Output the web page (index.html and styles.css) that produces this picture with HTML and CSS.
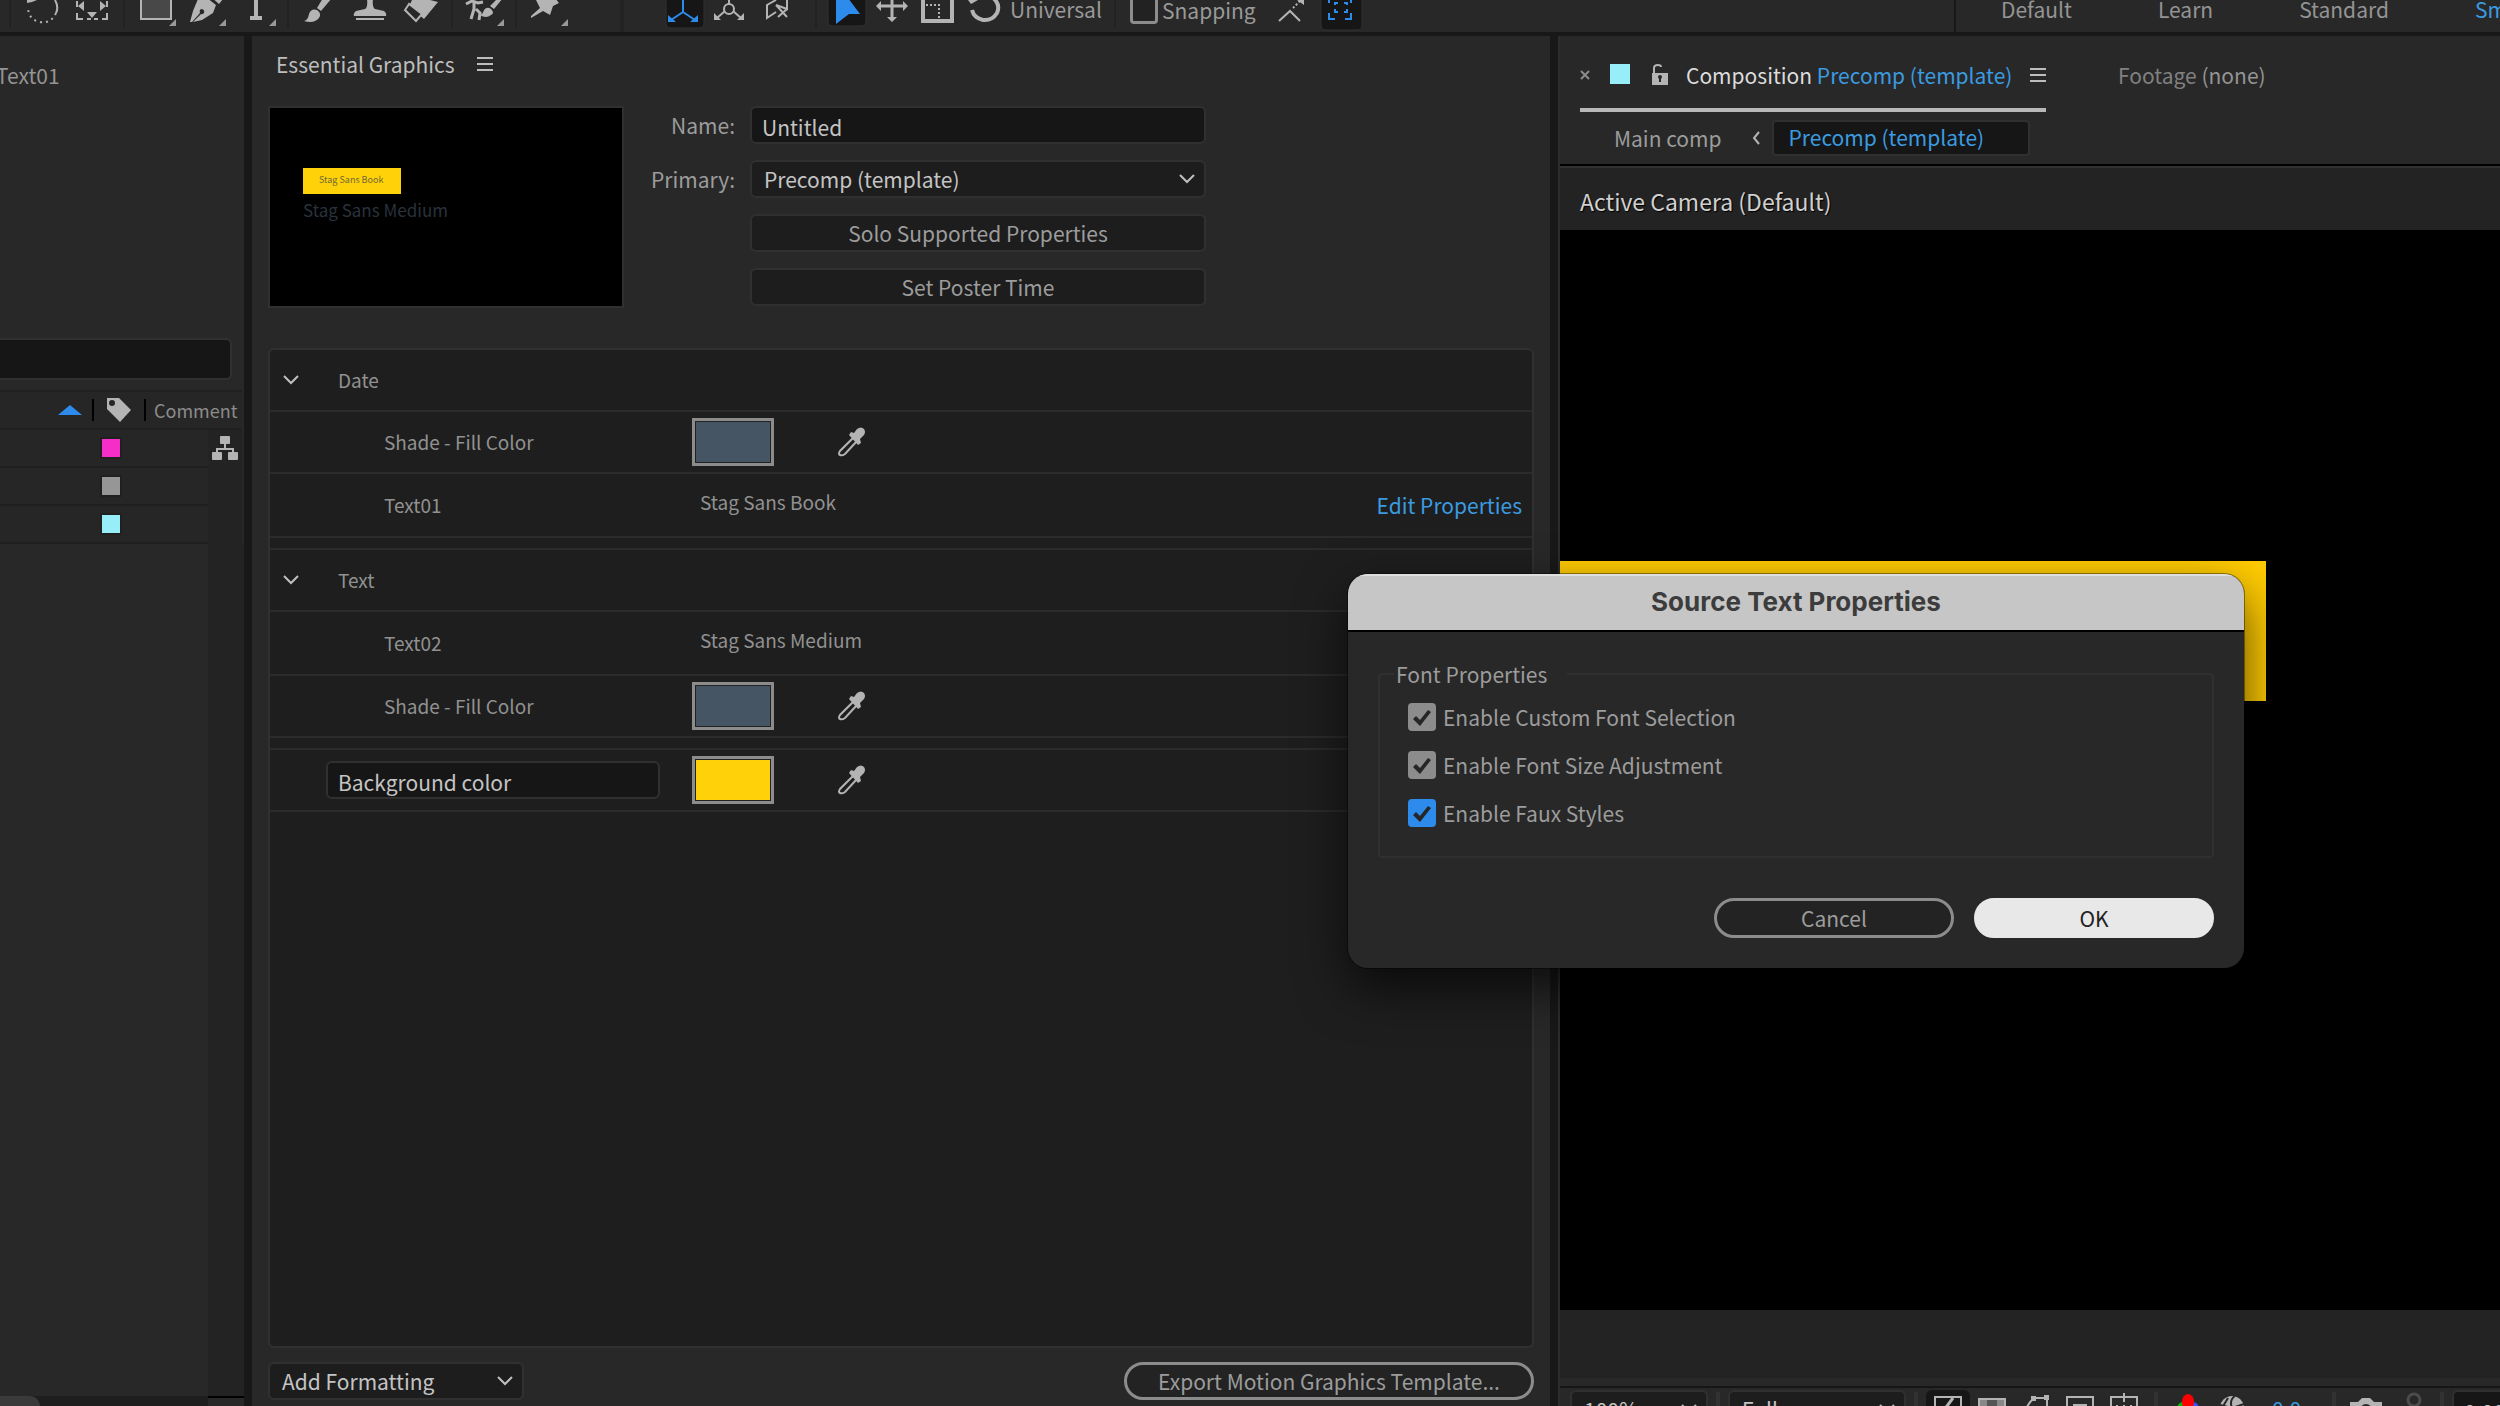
FILE: index.html
```html
<!DOCTYPE html>
<html lang="en">
<head>
<meta charset="utf-8">
<title>Essential Graphics</title>
<link rel="stylesheet" href="styles.css">
</head>
<body>
<svg class="defs" aria-hidden="true">
  <symbol id="dropper" viewBox="0 0 30 30">
    <path d="M17 11 4 24q-2 3 0 4t5-1L21 14" fill="none" stroke="#b4b4b4" stroke-width="2"/>
    <path d="M13 8l2-3 3 1 3-4q4-3 7 0 2 3 0 6l-4 4 1 4-3 2z" fill="#b4b4b4"/>
  </symbol>
  <symbol id="chevron" viewBox="0 0 16 10"><path d="M1 1l7 7 7-7" fill="none" stroke="#c0c0c0" stroke-width="2"/></symbol>
  <symbol id="menu" viewBox="0 0 16 14"><path d="M0 1h16M0 7h16M0 13h16" stroke="#bdbdbd" stroke-width="2"/></symbol>
</svg>
<div class="app">
  <header class="toolbar">
    <span class="sep"></span>
    <button class="tool" aria-label="Rotate"><svg viewBox="17 0 50 32"><path d="M27 0h10l-5 2-5 1z" fill="#b4b4b4"/><path d="M55 0q4 7 1 13" fill="none" stroke="#b4b4b4" stroke-width="2"/><path d="M56 13q-5 11-16 9-11-2-12-14" fill="none" stroke="#b4b4b4" stroke-width="2" stroke-dasharray="2 4"/></svg></button>
    <button class="tool" aria-label="Pan behind"><svg viewBox="67 0 50 32"><path d="M77 1v6M77 13v6h6M87 19h4M94 19h4M102 19h5v-6M107 7V1" fill="none" stroke="#b4b4b4" stroke-width="2"/><path d="M84 1v10l-6-5zM100 1v10l6-5zM87 12h10l-5 6z" fill="#b4b4b4"/></svg></button>
    <span class="sep"></span>
    <button class="tool" aria-label="Rectangle"><svg viewBox="131 0 50 32"><path d="M141-8h30v27h-30z" fill="#484848" stroke="#b4b4b4" stroke-width="2"/><path d="M176 19v7h-7z" fill="#999"/></svg></button>
    <button class="tool" aria-label="Pen"><svg viewBox="181 0 50 32"><path d="M198-1l-5 12-3 11 2 0 8-9q-1-3 1-4 4 0 3 4-2 2-3 1l-8 8 9-2 11-7 3-8-9-7z" fill="#b4b4b4"/><path d="M211-3l8 7 4-5z" fill="#b4b4b4"/><path d="M226 19v7h-7z" fill="#999"/></svg></button>
    <button class="tool" aria-label="Type"><svg viewBox="231 0 50 32"><path d="M256 0v18M250 18h12" stroke="#b4b4b4" stroke-width="4"/><path d="M276 19v7h-7z" fill="#999"/></svg></button>
    <span class="sep"></span>
    <button class="tool" aria-label="Brush"><svg viewBox="295 0 50 32"><path d="M304 21q4-1 5-7 2-6 8-4 5 3 2 8-5 6-15 3zM317 8l6-10h9l-11 13z" fill="#b4b4b4"/></svg></button>
    <button class="tool" aria-label="Clone stamp"><svg viewBox="345 0 50 32"><path d="M367-1h6q-1 8 2 10l9 2q3 2 2 5h-32q-1-3 2-5l9-2q3-2 2-10zM356 18h28v2h-28z" fill="#b4b4b4"/></svg></button>
    <button class="tool" aria-label="Eraser"><svg viewBox="395 0 50 32"><path d="M414-4l24 6-14 17-15-13z" fill="#b4b4b4"/><path d="M409 4l-4 6 11 11 6-7z" fill="#282828" stroke="#b4b4b4" stroke-width="2"/></svg></button>
    <span class="sep"></span>
    <button class="tool" aria-label="Roto brush"><svg viewBox="459 0 50 32"><path d="M466 4l6-3 6 2 5-1M474 1l0 8-3 10M476 9l4 4-1 7" fill="none" stroke="#b4b4b4" stroke-width="3"/><path d="M480 15q3-1 4-5 3-4 7-1 4 4 0 6-5 4-11 0zM490 6l8-8h5l-9 11z" fill="#b4b4b4"/><path d="M504 19v7h-7z" fill="#999"/></svg></button>
    <span class="sep"></span>
    <button class="tool" aria-label="Puppet pin"><svg viewBox="523 0 50 32"><path d="M535-2h20l4 5-6 3-3 9-7-4-12 7 0-2 9-8z" fill="#b4b4b4"/><path d="M568 19v7h-7z" fill="#999"/></svg></button>
    <span class="sep wide"></span>
    <button class="tool axis" aria-label="Local axis"><svg viewBox="662 0 46 32"><path d="M666-4h38v28q0 4-4 4h-30q-4 0-4-4z" fill="#161616" stroke="#303030"/><path d="M683 0v12l-12 8M683 12l12 8" fill="none" stroke="#2d8ceb" stroke-width="2"/><path d="M668 15v7h8zM698 15v7h-8z" fill="#2d8ceb"/></svg></button>
    <button class="tool axis" aria-label="World axis"><svg viewBox="708 0 46 32"><path d="M729 0v4M725 11l-8 7M733 11l8 7" stroke="#b4b4b4" stroke-width="2"/><circle cx="729" cy="9" r="5" fill="none" stroke="#b4b4b4" stroke-width="2"/><path d="M714 13v7h7zM744 13v7h-7z" fill="#b4b4b4"/></svg></button>
    <button class="tool axis" aria-label="View axis"><svg viewBox="754 0 46 32"><path d="M776 0l-9 5v13l9-6M787 0v9l-11-4M776 5l11 12M787 9l-9 8" fill="none" stroke="#b4b4b4" stroke-width="2"/></svg></button>
    <span class="sep group"></span>
    <button class="tool axis" aria-label="Selection"><svg viewBox="824 0 46 32"><path d="M828-4h38v26q0 4-4 4h-30q-4 0-4-4z" fill="#161616" stroke="#303030"/><path d="M836-2h12l12 16h-11l-13 10z" fill="#2d8ceb"/></svg></button>
    <button class="tool axis" aria-label="Position"><svg viewBox="870 0 46 32"><path d="M892 0v20M878 6h28" stroke="#b4b4b4" stroke-width="3"/><path d="M887 17h10l-5 5zM881 1v10l-5-5zM903 1v10l5-5z" fill="#b4b4b4"/></svg></button>
    <button class="tool axis" aria-label="Scale"><svg viewBox="916 0 46 32"><path d="M923-6h29v27h-29z" fill="none" stroke="#b4b4b4" stroke-width="4"/><path d="M926 5h13v15" fill="none" stroke="#b4b4b4" stroke-width="2" stroke-dasharray="2 2"/></svg></button>
    <button class="tool axis" aria-label="Rotation"><svg viewBox="962 0 46 32"><path d="M992-3q9 7 5 16-5 8-14 7-9-2-11-10" fill="none" stroke="#b4b4b4" stroke-width="4"/><path d="M968 0h10l-7 4z" fill="#b4b4b4"/></svg></button>
    <span class="mode">Universal</span>
    <span class="sep snap-sep"></span>
    <label class="snap"><input type="checkbox"> Snapping</label>
    <button class="tool edge" aria-label="Snap to edges"><svg viewBox="1270 0 50 32"><path d="M1279 21l11-10 10 10" fill="none" stroke="#b4b4b4" stroke-width="2"/><path d="M1293 8l7-7" stroke="#b4b4b4" stroke-width="2" stroke-dasharray="2 2"/><path d="M1297 0h7v5z" fill="#b4b4b4"/></svg></button>
    <button class="tool edge" aria-label="Snap to features"><svg viewBox="1320 0 50 32"><path d="M1321-4h41v30q0 4-4 4h-33q-4 0-4-4z" fill="#161616" stroke="#303030"/><path d="M1329 0v3M1351 0v3M1329 13v6h6M1345 19h6v-6M1335 5V3h3M1347 5V3h-3M1335 9v3h3M1347 9v3h-3" fill="none" stroke="#2d8ceb" stroke-width="2"/></svg></button>
    <nav class="workspaces">
      <a href="#">Default</a><a href="#">Learn</a><a href="#">Standard</a><a href="#" class="current">Small Screen</a>
    </nav>
  </header>

  <main class="panels">
    <section class="panel project">
      <div class="item-name">Text01</div>
      <input class="search" type="text" aria-label="Search project">
      <table class="items">
        <colgroup><col class="w-name"><col class="w-label"><col><col class="w-side"></colgroup>
        <thead>
          <tr>
            <th><svg class="sort" viewBox="0 0 24 10"><path d="M0 10 12 0l12 10z" fill="#2d8ceb"/></svg></th>
            <th class="c-label"><svg width="26" height="26" viewBox="0 0 26 26"><path d="M1 1h12l12 12-11 12L1 12z" fill="#b4b4b4"/><circle cx="6" cy="6" r="3" fill="#262626"/></svg></th>
            <th class="c-comment" colspan="2">Comment</th>
          </tr>
        </thead>
        <tbody>
          <tr><td></td><td><span class="chip pink"></span></td><td></td><td class="side"><svg width="26" height="24" viewBox="0 0 26 24"><path d="M9 0h8q1 0 1 1v6q0 1-1 1H9q-1 0-1-1V1q0-1 1-1zM1 16h8q1 0 1 1v6q0 1-1 1H1q-1 0-1-1v-6q0-1 1-1zM17 16h8q1 0 1 1v6q0 1-1 1h-8q-1 0-1-1v-6q0-1 1-1z" fill="#b4b4b4"/><path d="M13 8v5M5 16v-3h16v3" fill="none" stroke="#b4b4b4" stroke-width="2"/></svg></td></tr>
          <tr><td></td><td><span class="chip gray"></span></td><td></td><td class="side"></td></tr>
          <tr><td></td><td><span class="chip cyan"></span></td><td></td><td class="side"></td></tr>
        </tbody>
      </table>
      <div class="rest"><div class="blank"><div class="track"><div class="thumb"></div></div></div><div class="gutter"></div></div>
    </section>

    <section class="panel graphics">
      <h2 class="panel-title">Essential Graphics <svg width="16" height="14"><use href="#menu"/></svg></h2>
      <div class="setup">
        <div class="poster"><span class="poster-tag">Stag Sans Book</span><span class="poster-text">Stag Sans Medium</span></div>
        <div class="form">
          <label for="name">Name:</label>
          <input id="name" class="field" type="text" value="Untitled">
          <label for="primary">Primary:</label>
          <div class="select"><select id="primary" class="field"><option>Precomp (template)</option></select><svg width="16" height="10"><use href="#chevron"/></svg></div>
          <button class="flat">Solo Supported Properties</button>
          <button class="flat">Set Poster Time</button>
        </div>
      </div>

      <div class="props">
        <div class="row head"><svg width="16" height="10"><use href="#chevron"/></svg><span>Date</span></div>
        <div class="row"><span class="prop">Shade - Fill Color</span><input type="color" value="#455563" aria-label="Date fill color"><svg class="dropper"><use href="#dropper"/></svg></div>
        <div class="row text"><span class="prop">Text01</span><span class="value">Stag Sans Book</span><a href="#" class="edit">Edit Properties</a></div>
        <div class="gap-row"></div>
        <div class="row head"><svg width="16" height="10"><use href="#chevron"/></svg><span>Text</span></div>
        <div class="row text"><span class="prop">Text02</span><span class="value">Stag Sans Medium</span></div>
        <div class="row"><span class="prop">Shade - Fill Color</span><input type="color" value="#455563" aria-label="Text fill color"><svg class="dropper"><use href="#dropper"/></svg></div>
        <div class="gap-row"></div>
        <div class="row"><input class="field rename" type="text" value="Background color" aria-label="Property name"><input type="color" value="#ffd109" aria-label="Background color"><svg class="dropper"><use href="#dropper"/></svg></div>
      </div>

      <div class="actions">
        <div class="select"><select class="field" aria-label="Add Formatting"><option>Add Formatting</option></select><svg width="16" height="10"><use href="#chevron"/></svg></div>
        <button class="pill">Export Motion Graphics Template...</button>
      </div>
    </section>

    <section class="panel viewer">
      <div class="tabs">
        <div class="tab active"><svg class="close" viewBox="0 0 10 10"><path d="M1 1l8 8M9 1l-8 8" stroke="#8c8c8c" stroke-width="2"/></svg><span class="swatch"></span>
          <svg width="18" height="22" viewBox="0 0 18 22"><path d="M4 9V4q0-3 4-3 3 0 3 2" fill="none" stroke="#b4b4b4" stroke-width="2"/><path d="M2 9h16v12H2z" fill="#b4b4b4"/><circle cx="10" cy="13" r="2" fill="#282828"/><path d="M9 13h2v5H9z" fill="#282828"/></svg>
          <span class="tab-name">Composition <b>Precomp (template)</b></span><svg class="tab-menu" width="16" height="14"><use href="#menu"/></svg></div>
        <div class="tab">Footage <span>(none)</span></div>
      </div>
      <div class="crumbs"><a href="#">Main comp</a><svg width="8" height="14" viewBox="0 0 8 14"><path d="M7 1 2 7l5 6" fill="none" stroke="#b4b4b4" stroke-width="2"/></svg><a href="#" class="here">Precomp (template)</a></div>
      <div class="camera">Active Camera (Default)</div>
      <div class="canvas"><div class="shape"></div></div>
      <div class="under"></div>
      <div class="viewbar">
        <div class="select"><select class="field zoom" aria-label="Magnification"><option>100%</option></select><svg width="16" height="10"><use href="#chevron"/></svg></div>
        <span class="vsep"></span>
        <div class="select"><select class="field res" aria-label="Resolution"><option>Full</option></select><svg width="16" height="10"><use href="#chevron"/></svg></div>
        <span class="vsep"></span>
        <button class="vtool on" aria-label="Fast previews"><svg viewBox="0 0 44 44"><path d="M9 7h26v26H9z" fill="none" stroke="#b4b4b4" stroke-width="2"/><path d="M27 8 18 20h8l-8 12" fill="none" stroke="#b4b4b4" stroke-width="3"/></svg></button>
        <button class="vtool" aria-label="Transparency grid"><svg viewBox="0 0 44 44"><path d="M9 9h26v22H9z" fill="#555" stroke="#b4b4b4" stroke-width="2"/><path d="M10 10h7v20h-7zM27 10h7v20h-7z" fill="#888"/></svg></button>
        <button class="vtool" aria-label="Mask visibility"><svg viewBox="0 0 44 44"><path d="M10 28q2-15 11-20h12v20" fill="none" stroke="#b4b4b4" stroke-width="2"/><path d="M17 6h5v5h-5zM30 5h5v5h-5z" fill="#b4b4b4"/></svg></button>
        <button class="vtool" aria-label="Region of interest"><svg viewBox="0 0 44 44"><path d="M9 7h26v24H9z" fill="none" stroke="#b4b4b4" stroke-width="2"/><path d="M15 14h14v8H15z" fill="#b4b4b4"/></svg></button>
        <button class="vtool" aria-label="Guides"><svg viewBox="0 0 44 44"><path d="M9 7h26v24H9zM22 3v9M22 15v10M15 15v6M29 15v6" fill="none" stroke="#b4b4b4" stroke-width="2"/></svg></button>
        <span class="vsep"></span>
        <button class="vtool" aria-label="Channels"><svg viewBox="0 0 44 44"><ellipse cx="17" cy="19" rx="6" ry="7" fill="#0b0"/><ellipse cx="27" cy="19" rx="6" ry="7" fill="#35f"/><ellipse cx="22" cy="12" rx="6" ry="8" fill="#f00"/></svg></button>
        <button class="vtool" aria-label="Exposure"><svg viewBox="0 0 44 44"><circle cx="22" cy="18" r="12" fill="#b4b4b4"/><path d="M22 18q-3-8 3-12M22 18l-12-3M22 18l12-4M18 8l-6 10" stroke="#282828" stroke-width="2" fill="none"/></svg></button>
        <span class="exposure">0.0</span>
        <span class="vsep"></span>
        <button class="vtool" aria-label="Snapshot"><svg viewBox="0 0 44 44"><path d="M6 12h8l4-4h8l4 4h8v20H6z" fill="#b4b4b4"/><circle cx="22" cy="20" r="6" fill="#282828"/></svg></button>
        <button class="vtool" aria-label="Show snapshot"><svg viewBox="0 0 44 44"><circle cx="26" cy="10" r="6" fill="none" stroke="#4c4c4c" stroke-width="3"/><path d="M8 16h10l6 4h8v10H8z" fill="#4c4c4c"/></svg></button>
        <span class="vsep"></span>
        <input class="field time" type="text" value="0:00:00:00" aria-label="Current time">
      </div>
    </section>
  </main>

  <div class="dialog" role="dialog" aria-labelledby="dialog-title">
    <h1 id="dialog-title">Source Text Properties</h1>
    <form class="dialog-body">
      <fieldset>
        <legend>Font Properties</legend>
        <label><input type="checkbox" checked> Enable Custom Font Selection</label>
        <label><input type="checkbox" checked> Enable Font Size Adjustment</label>
        <label><input type="checkbox" class="accent" checked> Enable Faux Styles</label>
      </fieldset>
      <div class="buttons"><button type="button" class="pill">Cancel</button><button type="button" class="pill primary">OK</button></div>
    </form>
  </div>
</div>
</body>
</html>
```

FILE: styles.css
```css
* { box-sizing: border-box; }
body {
  margin: 0;
  background: #181818;
  color: #9c9c9c;
  font: 21px/28px "Noto Sans CJK SC", "Noto Sans", sans-serif;
}
button, input, select { font: inherit; color: inherit; margin: 0; }
button { padding: 0; border: 0; background: none; }
a { color: inherit; text-decoration: none; }
svg { display: block; flex: none; }
.defs { display: none; }
.app { position: relative; display: flex; flex-direction: column; height: 100vh; overflow: hidden; }

/* Toolbar */
.toolbar { display: flex; flex: none; height: 32px; padding-left: 3px; background: #282828; }
.sep { flex: none; width: 2px; height: 28px; margin: 0 6px; background: #222; }
.sep.wide { width: 4px; height: 32px; margin: 0 38px 0 47px; background: #222; }
.sep.group { margin: 0 7px 0 15px; }
.tool { flex: none; width: 50px; height: 32px; }
.tool.axis { width: 46px; }
.tool svg { width: 100%; height: 100%; }
.mode { width: 106px; padding-left: 2px; line-height: 18px; color: #999; }
.snap-sep { margin: 0 14px 0 0; }
.snap { display: flex; gap: 4px; width: 140px; line-height: 20px; color: #999; }
.snap input { appearance: none; width: 28px; height: 28px; margin-top: -4px; border: 3px solid #8c8c8c; border-radius: 4px; background: #222; }
.workspaces { display: flex; flex: none; width: 546px; margin-left: auto; padding-left: 45px; border-left: 2px solid #181818; line-height: 18px; color: #949494; white-space: nowrap; overflow: hidden; }
.workspaces a { flex: none; margin-right: 86px; }
.workspaces .current { color: #3b9be0; }

/* Panels */
.panels { display: grid; grid-template-columns: 244fr 1298fr 942fr; gap: 8px; flex: 1; min-height: 0; padding-top: 4px; }
.panel { display: flex; flex-direction: column; min-width: 0; min-height: 0; background: #282828; overflow: hidden; }
.field { height: 38px; padding: 0 10px; border: 2px solid #303030; border-radius: 6px; background: #161616; color: #c4c4c4; outline: 0; }
input.field { padding-top: 4px; }
.select { position: relative; }
.select select { appearance: none; width: 100%; padding: 0 12px; background: #1d1d1d; }
.select svg { position: absolute; right: 11px; top: 14px; pointer-events: none; }

/* Project */
.item-name { height: 302px; padding-top: 25px; text-indent: -4px; color: #949494; }
.search { flex: none; width: 232px; height: 42px; border: 2px solid #303030; border-left: 0; border-radius: 0 6px 6px 0; background: #161616; }
.items { width: 242px; margin-top: 10px; border-collapse: collapse; table-layout: fixed; font-size: 18px; line-height: 24px; background: #262626; }
.items th { height: 38px; padding: 0; border-top: 2px solid #202020; border-bottom: 2px solid #202020; font-weight: 400; text-align: left; }
.items td { height: 38px; padding: 0 0 0 10px; border-bottom: 2px solid #1f1f1f; }
.w-name { width: 92px; }
.w-label { width: 52px; }
.w-side { width: 34px; }
.c-label, .c-comment { background: linear-gradient(#000, #000) 0 50% / 2px 22px no-repeat; }
.items .c-comment { padding-left: 10px; color: #8c8c8c; }
.c-label svg { margin-left: 14px; }
.sort { width: 24px; height: 10px; margin-left: 58px; }
.items .side { padding: 0 4px; border-bottom-color: #232323; background: #232323; }
.chip { display: block; width: 18px; height: 18px; outline: 2px solid #202020; }
.pink { background: #f52ec8; }
.gray { background: #969696; }
.cyan { background: #97eef8; }
.rest { display: flex; flex: 1; }
.blank { display: flex; align-items: flex-end; flex: 1; }
.track { width: 100%; height: 10px; background: #1e1e1e; overflow: hidden; }
.thumb { width: 40px; height: 20px; border-radius: 0 10px 0 0; background: #3a3a3a; }
.gutter { width: 36px; border-bottom: 8px solid #282828; background: linear-gradient(#000, #000) 0 100% / 100% 2px no-repeat #232323; background-clip: padding-box; }

/* Essential Graphics */
.graphics { padding: 0 16px 0; }
.panel-title { display: flex; align-items: center; gap: 22px; height: 56px; margin: 0; padding-left: 8px; font-size: 21px; font-weight: 400; color: #bdbdbd; }
.setup { display: flex; justify-content: flex-start; margin-top: 14px; }
.poster { display: flex; flex-direction: column; align-items: flex-start; width: 356px; height: 202px; padding: 60px 0 0 33px; border: 2px solid #303030; background: #000; }
.poster-tag { width: 98px; height: 26px; padding-left: 16px; background: #ffd109; color: #6f6838; font-size: 9px; line-height: 24px; }
.poster-text { font-size: 17px; line-height: 32px; color: #29323c; white-space: nowrap; }
.form { display: grid; grid-template-columns: 111px 456px; column-gap: 15px; row-gap: 16px; align-content: start; }
.form label { line-height: 38px; text-align: right; }
.form .flat { grid-column: 2; height: 38px; border: 2px solid #303030; border-radius: 6px; background: #1d1d1d; }
.props { flex: 1; margin-top: 40px; border: 2px solid #303030; border-radius: 6px; background: #1e1e1e; font-size: 19px; color: #919191; }
.row { display: flex; align-items: center; height: 62px; padding-left: 114px; border-bottom: 2px solid #2b2b2b; }
.row.text { height: 64px; }
.row.head { padding-left: 13px; gap: 39px; }
.prop { width: 308px; }
.value { margin-left: 8px; padding-bottom: 6px; }
.edit { margin-left: auto; padding-right: 10px; font-size: 21px; color: #3b9be0; }
.gap-row { height: 12px; border-bottom: 2px solid #2b2b2b; }
input[type="color"] { appearance: none; flex: none; width: 82px; height: 48px; padding: 0; border: 3px solid #8c8c8c; background: #222; }
input[type="color"]::-webkit-color-swatch-wrapper { padding: 0; }
input[type="color"]::-webkit-color-swatch { border: 1px solid #222; border-radius: 0; }
.dropper { width: 30px; height: 30px; margin-left: 62px; }
.rename { width: 334px; margin: 0 32px 0 -58px; font-size: 21px; }
.actions { display: flex; justify-content: space-between; flex: none; height: 58px; padding-top: 14px; }
.actions .select { width: 256px; }
.pill { height: 40px; border: 3px solid #8c8c8c; border-radius: 20px; background: #232323; color: #9c9c9c; }
.actions .pill { width: 410px; height: 38px; }

/* Viewer */
.viewer { border-left: 2px solid #2c2c2c; }
.tabs { display: flex; flex: none; gap: 72px; height: 76px; padding-left: 20px; line-height: 78px; white-space: nowrap; color: #808080; }
.tab span { color: #949494; }
.tab.active { display: flex; align-items: center; width: 466px; padding-top: 6px; border-bottom: 4px solid #b8b8b8; line-height: 28px; }
.tab.active .close { width: 10px; height: 10px; margin-right: 20px; }
.tab.active .swatch { width: 20px; height: 20px; margin: 0 20px 2px 0; background: #97eef8; }
.tab.active .tab-name { margin-left: 18px; color: #dcdcdc; }
.tab b { font-weight: 400; color: #3b9be0; }
.tab-menu { margin-left: auto; }
.crumbs { display: flex; align-items: center; flex: none; height: 52px; padding-left: 54px; gap: 12px; white-space: nowrap; line-height: 26px; }
.crumbs svg { margin-left: 18px; }
.crumbs .here { width: 258px; height: 36px; padding-left: 15px; border: 2px solid #303030; border-radius: 4px; background: #161616; color: #3b9be0; line-height: 30px; }
.camera { flex: none; height: 66px; padding-left: 20px; border-top: 2px solid #000; background: #232323; font-size: 23px; line-height: 70px; color: #d0d0d0; text-shadow: 1px 1px 1px #000; box-shadow: inset 0 2px #303030; }
.canvas { position: relative; flex: 1; background: #000; }
.shape { position: absolute; left: 0; top: 331px; width: 706px; height: 140px; background: #ffcb00; }
.under { flex: none; height: 78px; border-bottom: 2px solid #161616; background: linear-gradient(#232323 68px, #282828 68px); }
.viewbar { display: flex; flex: none; height: 18px; padding: 2px 0 0 10px; white-space: nowrap; }
.viewbar .field { flex: none; }
.viewbar .select { flex: none; }
.zoom { min-width: 138px; }
.res { min-width: 178px; }
.vsep { flex: none; width: 4px; height: 38px; margin: 2px 8px 0; background: #323232; }
.vtool { flex: none; width: 44px; height: 44px; }
.vtool.on { border-radius: 6px; background: #161616; }
.vtool svg { width: 44px; height: 44px; }
.exposure { flex: none; width: 70px; padding-left: 18px; line-height: 36px; color: #3b9be0; }
.time { width: 140px; }

/* Dialog */
.dialog { position: absolute; left: 1348px; top: 574px; width: 896px; border-radius: 20px; overflow: hidden; background: #282828; box-shadow: 0 0 0 1px #0006, 0 20px 50px #000a; }
.dialog h1 { margin: 0; padding-bottom: 2px; border-top: 2px solid #dedede; border-bottom: 2px solid #000; background: #c6c6c6; color: #3c3c3c; font: 700 26px/52px Inter, sans-serif; text-align: center; }
.dialog-body { padding: 28px 30px 30px; }
fieldset { display: flex; flex-direction: column; gap: 20px; height: 198px; margin: 0; padding: 15px 28px; border: 2px solid #303030; border-radius: 4px; }
legend { margin-left: -14px; padding: 0 20px 0 2px; }
fieldset label { display: flex; align-items: center; gap: 7px; height: 28px; }
fieldset input { appearance: none; width: 28px; height: 28px; border-radius: 4px; background: #8c8c8c; }
fieldset input.accent { background: #2d8ceb; }
fieldset input::after { content: ""; display: block; width: 28px; height: 28px; background: #262626; clip-path: polygon(5px 16px, 8px 13px, 12px 17px, 20px 7px, 23px 9px, 12px 23px); }
.buttons { display: flex; justify-content: flex-end; gap: 20px; margin-top: 40px; }
.buttons .pill { width: 240px; }
.pill.primary { border-color: #e8e8e8; background: #e8e8e8; color: #222; }
```
